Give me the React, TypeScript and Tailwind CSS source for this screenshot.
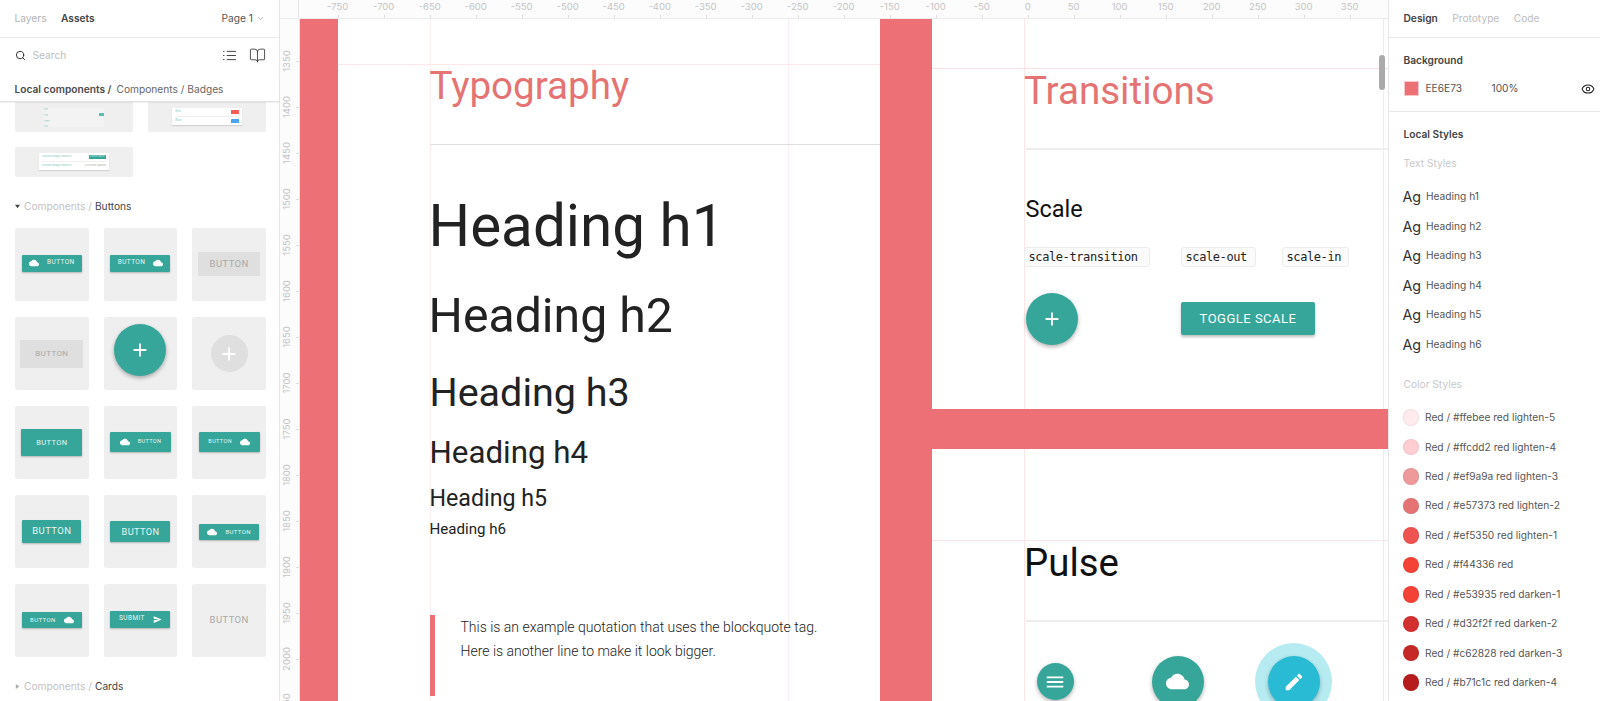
import { BookOpen, ChevronDown, Eye, Search } from 'lucide-react';

const CLOUD = 'M19.35 10.04C18.67 6.59 15.64 4 12 4 9.11 4 6.6 5.64 5.35 8.04 2.34 8.36 0 10.91 0 14c0 3.31 2.69 6 6 6h13c2.76 0 5-2.24 5-5 0-2.64-2.05-4.78-4.65-4.96z';
const ADD = 'M19 13h-6v6h-2v-6H5v-2h6V5h2v6h6v2z';
const MENU = 'M3 18h18v-2H3v2zm0-5h18v-2H3v2zm0-7v2h18V6H3z';
const EDIT = 'M3 17.25V21h3.75L17.81 9.94l-3.75-3.75L3 17.25zM20.71 7.04c.39-.39.39-1.02 0-1.41l-2.34-2.34c-.39-.39-1.02-.39-1.41 0l-1.83 1.83 3.75 3.75 1.83-1.83z';
const SEND = 'M2.01 21L23 12 2.01 3 2 10l15 2-15 2z';

function Glyph({ d, className }: { d: string; className: string }) {
  return (
    <svg viewBox="0 0 24 24" fill="currentColor" className={className}>
      <path d={d} />
    </svg>
  );
}

const ROBOTO = "font-['Roboto',sans-serif]";

function Cell({ children }: { children?: React.ReactNode }) {
  return <div className="h-[73.6px] bg-[#efefef] rounded-[2px] flex items-center justify-center">{children}</div>;
}

function Btn({ className, children }: { className: string; children: React.ReactNode }) {
  return (
    <div className={`${ROBOTO} bg-[#36a69a] text-[#e6f5f3] rounded-[1px] flex items-center justify-center shadow-[0_1px_2px_rgba(0,0,0,0.25)] tracking-[0.4px] ${className}`}>
      {children}
    </div>
  );
}

function ButtonGrid() {
  return (
    <div className="grid grid-cols-3 gap-x-[15px] gap-y-[15.4px] mt-[14px]">
      <Cell>
        <Btn className="w-[60px] h-[17px] mb-[3px] text-[6.5px] gap-[8px]"><Glyph d={CLOUD} className="w-[10px] h-[10px] text-white" />BUTTON</Btn>
      </Cell>
      <Cell>
        <Btn className="w-[60px] h-[17px] mb-[3px] text-[6.5px] gap-[8px]">BUTTON<Glyph d={CLOUD} className="w-[10px] h-[10px] text-white" /></Btn>
      </Cell>
      <Cell>
        <div className={`${ROBOTO} w-[62px] h-[24px] mb-[1px] bg-[#dfdfdf] text-[#a9a9a9] text-[9.5px] tracking-[0.4px] flex items-center justify-center rounded-[1px]`}>BUTTON</div>
      </Cell>

      <Cell>
        <div className={`${ROBOTO} w-[63px] h-[28px] bg-[#dfdfdf] text-[#a9a9a9] text-[8px] tracking-[0.4px] flex items-center justify-center rounded-[1px]`}>BUTTON</div>
      </Cell>
      <Cell>
        <div className="w-[52px] h-[52px] mb-[7px] rounded-full bg-[#36a69a] text-white flex items-center justify-center shadow-[0_2px_4px_rgba(0,0,0,0.3)]">
          <Glyph d={ADD} className="w-[22px] h-[22px]" />
        </div>
      </Cell>
      <Cell>
        <div className="w-[37px] h-[37px] rounded-full bg-[#dfdfdf] text-white flex items-center justify-center">
          <Glyph d={ADD} className="w-[22px] h-[22px]" />
        </div>
      </Cell>

      <Cell>
        <Btn className="w-[61px] h-[27px] text-[7.5px]">BUTTON</Btn>
      </Cell>
      <Cell>
        <Btn className="w-[61px] h-[20px] mb-[2px] text-[5.5px] gap-[8px]"><Glyph d={CLOUD} className="w-[10px] h-[10px] text-white" />BUTTON</Btn>
      </Cell>
      <Cell>
        <Btn className="w-[61px] h-[20px] mb-[2px] text-[5.5px] gap-[8px]">BUTTON<Glyph d={CLOUD} className="w-[10px] h-[10px] text-white" /></Btn>
      </Cell>

      <Cell>
        <Btn className="w-[59px] h-[23px] text-[9.5px]">BUTTON</Btn>
      </Cell>
      <Cell>
        <Btn className="w-[60px] h-[21px] text-[9.2px]">BUTTON</Btn>
      </Cell>
      <Cell>
        <Btn className="w-[60px] h-[16px] text-[6px] gap-[8px]"><Glyph d={CLOUD} className="w-[10px] h-[10px] text-white" />BUTTON</Btn>
      </Cell>

      <Cell>
        <Btn className="w-[60px] h-[16px] mb-[2px] text-[6px] gap-[8px]">BUTTON<Glyph d={CLOUD} className="w-[10px] h-[10px] text-white" /></Btn>
      </Cell>
      <Cell>
        <Btn className="w-[60px] h-[17px] mb-[3px] text-[6.5px] gap-[8px]">SUBMIT<Glyph d={SEND} className="w-[9px] h-[9px] text-white" /></Btn>
      </Cell>
      <Cell>
        <div className={`${ROBOTO} text-[#a9a9a9] text-[9.5px] tracking-[0.4px]`}>BUTTON</div>
      </Cell>
    </div>
  );
}

function BadgePreviews() {
  return (
    <>
      <div className="grid grid-cols-2 gap-x-[15.5px]">
        <div className="h-[30px] bg-[#efefef] rounded-b-[2px] flex justify-center">
          <div className="w-[60px] h-[19px] mt-[6px] flex flex-col justify-between text-[2px] leading-none text-[#7ecdc4] bg-[#f3f3f3]">
            <span>One</span>
            <span className="flex justify-between items-center">Two<i className="w-[5px] h-[3px] bg-[#5cbcb1]" /></span>
            <span>Three</span>
            <span>Four</span>
          </div>
        </div>
        <div className="h-[30px] bg-[#efefef] rounded-b-[2px] flex justify-center">
          <div className="w-[70px] h-[17px] mt-[6px] bg-white shadow-[0_1px_1px_rgba(0,0,0,0.12)] flex flex-col text-[3px] leading-none text-[#7ecdc4] px-[3px]">
            <span className="h-[8.5px] flex items-center justify-between border-b border-[#f0f0f0]">Red<i className="w-[8px] h-[4.5px] bg-[#f55b57] rounded-[0.5px]" /></span>
            <span className="h-[8.5px] flex items-center justify-between">Blue<i className="w-[8px] h-[4.5px] bg-[#4aa5f0] rounded-[0.5px]" /></span>
          </div>
        </div>
      </div>
      <div className="grid grid-cols-2 gap-x-[15.5px] mt-[15px]">
        <div className="h-[30px] bg-[#efefef] rounded-[2px] flex justify-center">
          <div className="w-[70px] h-[17px] mt-[6px] bg-white shadow-[0_1px_1px_rgba(0,0,0,0.12)] flex flex-col text-[2.6px] leading-none text-[#7ecdc4] px-[3px]">
            <span className="h-[8.5px] flex items-center justify-between border-b border-[#f0f0f0]">Custom Badge Captions<i className="w-[17px] h-[4px] bg-[#36a69a] not-italic text-[#cdeae6] text-[2px] text-center">Custom caption</i></span>
            <span className="h-[8.5px] flex items-center justify-between">Custom Badge Captions<i className="not-italic text-[#aaa]">4 custom caption</i></span>
          </div>
        </div>
      </div>
    </>
  );
}

function AssetsPanel() {
  return (
    <aside className="w-[280px] h-full shrink-0 border-r border-[#e6e6e6] bg-white flex flex-col font-['Inter',sans-serif]">
      <div className="h-[38px] shrink-0 border-b border-[#e8e8e8] flex items-center pl-[14.5px] pr-[14px] text-[10.2px]">
        <span className="text-[#b3b3b3]">Layers</span>
        <span className="ml-[14.5px] font-semibold text-[#444]">Assets</span>
        <span className="ml-auto text-[#555]">Page 1</span>
        <ChevronDown className="w-[9px] h-[9px] ml-[3px] text-[#999]" />
      </div>
      <div className="h-[35px] shrink-0 flex items-center pl-[14.5px] pr-[13px]">
        <Search className="w-[11px] h-[11px] text-[#222]" strokeWidth={2} />
        <span className="ml-[7px] text-[10.2px] text-[#bdbdbd]">Search</span>
        <svg viewBox="0 0 14 12" fill="none" stroke="#333" strokeWidth="1" className="ml-auto w-[13px] h-[11px]">
          <path d="M0 1.5h1.5M0 6h1.5M0 10.5h1.5M4 1.5h10M4 6h10M4 10.5h10" />
        </svg>
        <BookOpen className="ml-[13px] w-[17px] h-[17px] text-[#333]" strokeWidth={1.2} />
      </div>
      <div className="h-[29px] shrink-0 border-b border-[#e0e0e0] shadow-[0_1px_1px_rgba(0,0,0,0.05)] z-10 px-[14.5px] pt-[9px] text-[10.2px] text-[#666]">
        <span className="font-semibold text-[#4a4a4a]">Local components /</span>
        <span className="ml-[5px]">Components / Badges</span>
      </div>
      <div className="flex-1 overflow-hidden pl-[15px] pr-[13px]">
        <BadgePreviews />
        <div className="flex items-center text-[10.2px] mt-[21.5px]">
          <svg viewBox="0 0 6 6" className="w-[5px] h-[5px] fill-[#444] mr-[4px]"><path d="M0 1h6L3 5z" /></svg>
          <span className="text-[#c2c2c2]">Components /</span>
          <span className="ml-[3px] text-[#444]">Buttons</span>
        </div>
        <ButtonGrid />
        <div className="flex items-center text-[10.2px] mt-[22px]">
          <svg viewBox="0 0 6 6" className="w-[5px] h-[5px] fill-[#aaa] mr-[4px]"><path d="M1 0v6l4-3z" /></svg>
          <span className="text-[#c2c2c2]">Components /</span>
          <span className="ml-[3px] text-[#444]">Cards</span>
        </div>
      </div>
    </aside>
  );
}

const TOP_MARKS = Array.from({ length: 23 }, (_, i) => -750 + i * 50);
const SIDE_MARKS = Array.from({ length: 15 }, (_, i) => 1350 + i * 50);

function TopRuler() {
  return (
    <div className="relative h-[19px] shrink-0 bg-[#fcfcfc] border-b border-[#ebebeb] overflow-hidden font-['Inter',sans-serif] text-[9.5px] text-[#c4c4c4]">
      <div className="absolute left-0 top-0 w-[19px] h-full border-r border-[#e6e6e6]" />
      {TOP_MARKS.map((v) => {
        const x = 57.67 + (v + 750) * 0.92;
        return (
          <div key={v} className="absolute top-0 h-[18px]" style={{ left: x }}>
            <span className="absolute top-[1px] -translate-x-1/2 leading-[12px]">{v}</span>
            <i className="absolute bottom-0 left-0 w-px h-[3px] bg-[#dcdcdc]" />
          </div>
        );
      })}
    </div>
  );
}

function SideRuler() {
  return (
    <div className="relative w-[20px] shrink-0 bg-[#fcfcfc] border-r border-[#e6e6e6] overflow-hidden font-['Inter',sans-serif] text-[9.5px] text-[#c4c4c4]">
      {SIDE_MARKS.map((v) => {
        const y = 42 + (v - 1350) * 0.92;
        return (
          <div key={v} className="absolute left-0 w-[19px]" style={{ top: y }}>
            <span className="absolute left-[7px] top-0 -translate-x-1/2 -translate-y-1/2 -rotate-90 leading-[12px]">{v}</span>
            <i className="absolute right-0 top-0 h-px w-[3px] bg-[#dcdcdc]" />
          </div>
        );
      })}
    </div>
  );
}

function Code({ children, className }: { children: string; className: string }) {
  return (
    <code className={`h-[20px] pl-[3.5px] bg-[#fbfbfb] border border-[#ececec] rounded-[3px] flex items-center font-['DejaVu_Sans_Mono',monospace] text-[12px] tracking-[-0.4px] text-[#222] ${className}`}>
      {children}
    </code>
  );
}

function Frames() {
  return (
    <div className={`relative flex-1 overflow-hidden bg-white ${ROBOTO}`}>
      {/* guides */}
      <div className="absolute left-[130px] top-0 w-px h-full bg-[#ffeef0]" />
      <div className="absolute left-[488px] top-0 w-px h-full bg-[#ffeef0]" />
      <div className="absolute left-[724px] top-0 w-px h-full bg-[#ffe6e6]" />
      <div className="absolute left-[1083px] top-0 w-px h-full bg-[#ffe6e6]" />
      <div className="absolute left-[38px] top-[45px] w-[542px] h-px bg-[#ffe6e8]" />
      <div className="absolute left-[632px] top-[49px] w-[456px] h-px bg-[#ffe0e0]" />
      <div className="absolute left-[632px] top-[521px] w-[456px] h-px bg-[#ffe6e6]" />

      {/* frame gutters */}
      <div className="absolute left-0 top-0 w-[38px] h-full bg-[#ec7075]" />
      <div className="absolute left-[580px] top-0 w-[52px] h-full bg-[#ec7075]" />
      <div className="absolute left-[632px] top-[390px] w-[456px] h-[40px] bg-[#ec7075]" />

      {/* typography frame */}
      <div className="absolute left-[129.5px] top-[47.7px] w-[450px] text-[#222]">
        <div className="text-[38.6px] leading-none text-[#e57373]">Typography</div>
        <div className="h-px ml-[1.5px] mt-[39.2px] bg-[#dedede]" />
        <div className="flex flex-col mt-[52px]">
          <div className="text-[58.4px] leading-none -ml-px">Heading h1</div>
          <div className="text-[48.2px] leading-none mt-[36.3px] -ml-px">Heading h2</div>
          <div className="text-[39.5px] leading-none mt-[32.3px]">Heading h3</div>
          <div className="text-[31.3px] leading-none mt-[25px]">Heading h4</div>
          <div className="text-[23.2px] leading-none mt-[18.7px]">Heading h5</div>
          <div className="text-[15.1px] leading-none mt-[11.9px]">Heading h6</div>
        </div>
        <div className="flex mt-[78px] ml-[0.5px]">
          <div className="w-[5px] h-[81px] bg-[#ec7075]" />
          <div className="ml-[25.5px] text-[14px] font-light leading-[24px]">
            This is an example quotation that uses the blockquote tag.<br />
            Here is another line to make it look bigger.
          </div>
        </div>
      </div>

      {/* transitions frame */}
      <div className="absolute left-[724px] top-[52.7px] w-[364px]">
        <div className="text-[38.6px] leading-none text-[#e57373]">Transitions</div>
        <div className="h-[2px] ml-[2px] mt-[38.2px] bg-[#eeeeee]" />
        <div className="text-[23.5px] leading-none text-[#111] ml-[1.5px] mt-[47.5px]">Scale</div>
        <div className="flex mt-[25.5px]">
          <Code className="w-[126px]">scale-transition</Code>
          <Code className="w-[75px] ml-[31px]">scale-out</Code>
          <Code className="w-[67px] ml-[26px]">scale-in</Code>
        </div>
        <div className="flex items-center mt-[26px]">
          <div className="w-[52px] h-[52px] ml-[2px] rounded-full bg-[#36a69a] text-white flex items-center justify-center shadow-[0_2px_4px_rgba(0,0,0,0.3)]">
            <Glyph d={ADD} className="w-[22px] h-[22px]" />
          </div>
          <div className="w-[134px] h-[33px] ml-[103px] rounded-[2px] bg-[#36a69a] text-white text-[13px] tracking-[0.5px] flex items-center justify-center shadow-[0_2px_3px_rgba(0,0,0,0.25)]">TOGGLE SCALE</div>
        </div>
      </div>

      {/* pulse frame */}
      <div className="absolute left-[724px] top-[525.4px] w-[364px]">
        <div className="text-[38.4px] leading-none text-[#111]">Pulse</div>
        <div className="h-[2px] ml-[2px] mt-[37px] bg-[#eeeeee]" />
        <div className="relative mt-[34px] h-[60px]">
          <div className="absolute left-[12.5px] top-[7.5px] w-[37px] h-[37px] rounded-full bg-[#36a69a] text-white flex items-center justify-center shadow-[0_2px_4px_rgba(0,0,0,0.3)]">
            <Glyph d={MENU} className="w-[22px] h-[22px]" />
          </div>
          <div className="absolute left-[127.5px] top-0 w-[52px] h-[52px] rounded-full bg-[#36a69a] text-white flex items-center justify-center shadow-[0_2px_4px_rgba(0,0,0,0.3)]">
            <Glyph d={CLOUD} className="w-[23px] h-[23px]" />
          </div>
          <div className="absolute left-[231px] top-[-13px] w-[77px] h-[77px] rounded-full bg-[#b6ebf1]" />
          <div className="absolute left-[243.5px] top-0 w-[52px] h-[52px] rounded-full bg-[#29bbd3] text-white flex items-center justify-center shadow-[0_2px_4px_rgba(0,0,0,0.25)]">
            <Glyph d={EDIT} className="w-[22px] h-[22px]" />
          </div>
        </div>
      </div>

      {/* canvas scrollbar */}
      <div className="absolute left-[1079px] top-[36px] w-[5.5px] h-[35px] rounded-full bg-[#aaaaaa]" />
    </div>
  );
}

const TEXT_STYLES = ['Heading h1', 'Heading h2', 'Heading h3', 'Heading h4', 'Heading h5', 'Heading h6'];

const COLOR_STYLES = [
  { hex: '#ffebee', name: 'Red / #ffebee red lighten-5' },
  { hex: '#ffcdd2', name: 'Red / #ffcdd2 red lighten-4' },
  { hex: '#ef9a9a', name: 'Red / #ef9a9a red lighten-3' },
  { hex: '#e57373', name: 'Red / #e57373 red lighten-2' },
  { hex: '#ef5350', name: 'Red / #ef5350 red lighten-1' },
  { hex: '#f44336', name: 'Red / #f44336 red' },
  { hex: '#f44336', name: 'Red / #e53935 red darken-1' },
  { hex: '#d32f2f', name: 'Red / #d32f2f red darken-2' },
  { hex: '#c62828', name: 'Red / #c62828 red darken-3' },
  { hex: '#b71c1c', name: 'Red / #b71c1c red darken-4' },
];

function DesignPanel() {
  return (
    <aside className="w-[212px] h-full shrink-0 border-l border-[#e6e6e6] bg-white font-['Inter',sans-serif] text-[10.2px] overflow-hidden">
      <div className="h-[38px] border-b border-[#e8e8e8] flex items-center pl-[14.5px] gap-[14.5px]">
        <span className="font-semibold text-[#444]">Design</span>
        <span className="text-[#bdbdbd]">Prototype</span>
        <span className="text-[#bdbdbd]">Code</span>
      </div>
      <div className="h-[74px] border-b border-[#e8e8e8] px-[14.5px] pt-[15px]">
        <div className="font-semibold text-[#444] leading-[14px]">Background</div>
        <div className="flex items-center mt-[14px] text-[#555]">
          <div className="w-[15px] h-[15px] bg-[#ec7075] border border-[#f8c8ca]" />
          <span className="ml-[7px] w-[66px]">EE6E73</span>
          <span>100%</span>
          <Eye className="ml-auto w-[14px] h-[14px] text-[#222] -mr-[9px]" strokeWidth={1.8} />
        </div>
      </div>
      <div className="px-[14.5px] pt-[15px]">
        <div className="font-semibold text-[#444] leading-[14px]">Local Styles</div>
        <div className="mt-[15px] leading-[14px] text-[#c8c8c8]">Text Styles</div>
        <div className="mt-[12px] flex flex-col">
          {TEXT_STYLES.map((name) => (
            <div key={name} className="h-[29.5px] flex items-center text-[#555]">
              <span className="w-[23.5px] shrink-0 text-[14.3px] text-[#333] -ml-px">Ag</span>
              {name}
            </div>
          ))}
        </div>
        <div className="mt-[18px] leading-[14px] text-[#c8c8c8]">Color Styles</div>
        <div className="mt-[12px] flex flex-col">
          {COLOR_STYLES.map((c) => (
            <div key={c.name} className="h-[29.45px] flex items-center text-[#555]">
              <i className="w-[16.5px] h-[16.5px] -ml-px mr-[6px] rounded-full border border-black/5" style={{ background: c.hex }} />
              {c.name}
            </div>
          ))}
        </div>
      </div>
    </aside>
  );
}

export default function App() {
  return (
    <div className="flex w-[1600px] h-[701px] overflow-hidden bg-white">
      <AssetsPanel />
      <main className="flex-1 min-w-0 flex flex-col">
        <TopRuler />
        <div className="flex flex-1 min-h-0">
          <SideRuler />
          <Frames />
        </div>
      </main>
      <DesignPanel />
    </div>
  );
}
